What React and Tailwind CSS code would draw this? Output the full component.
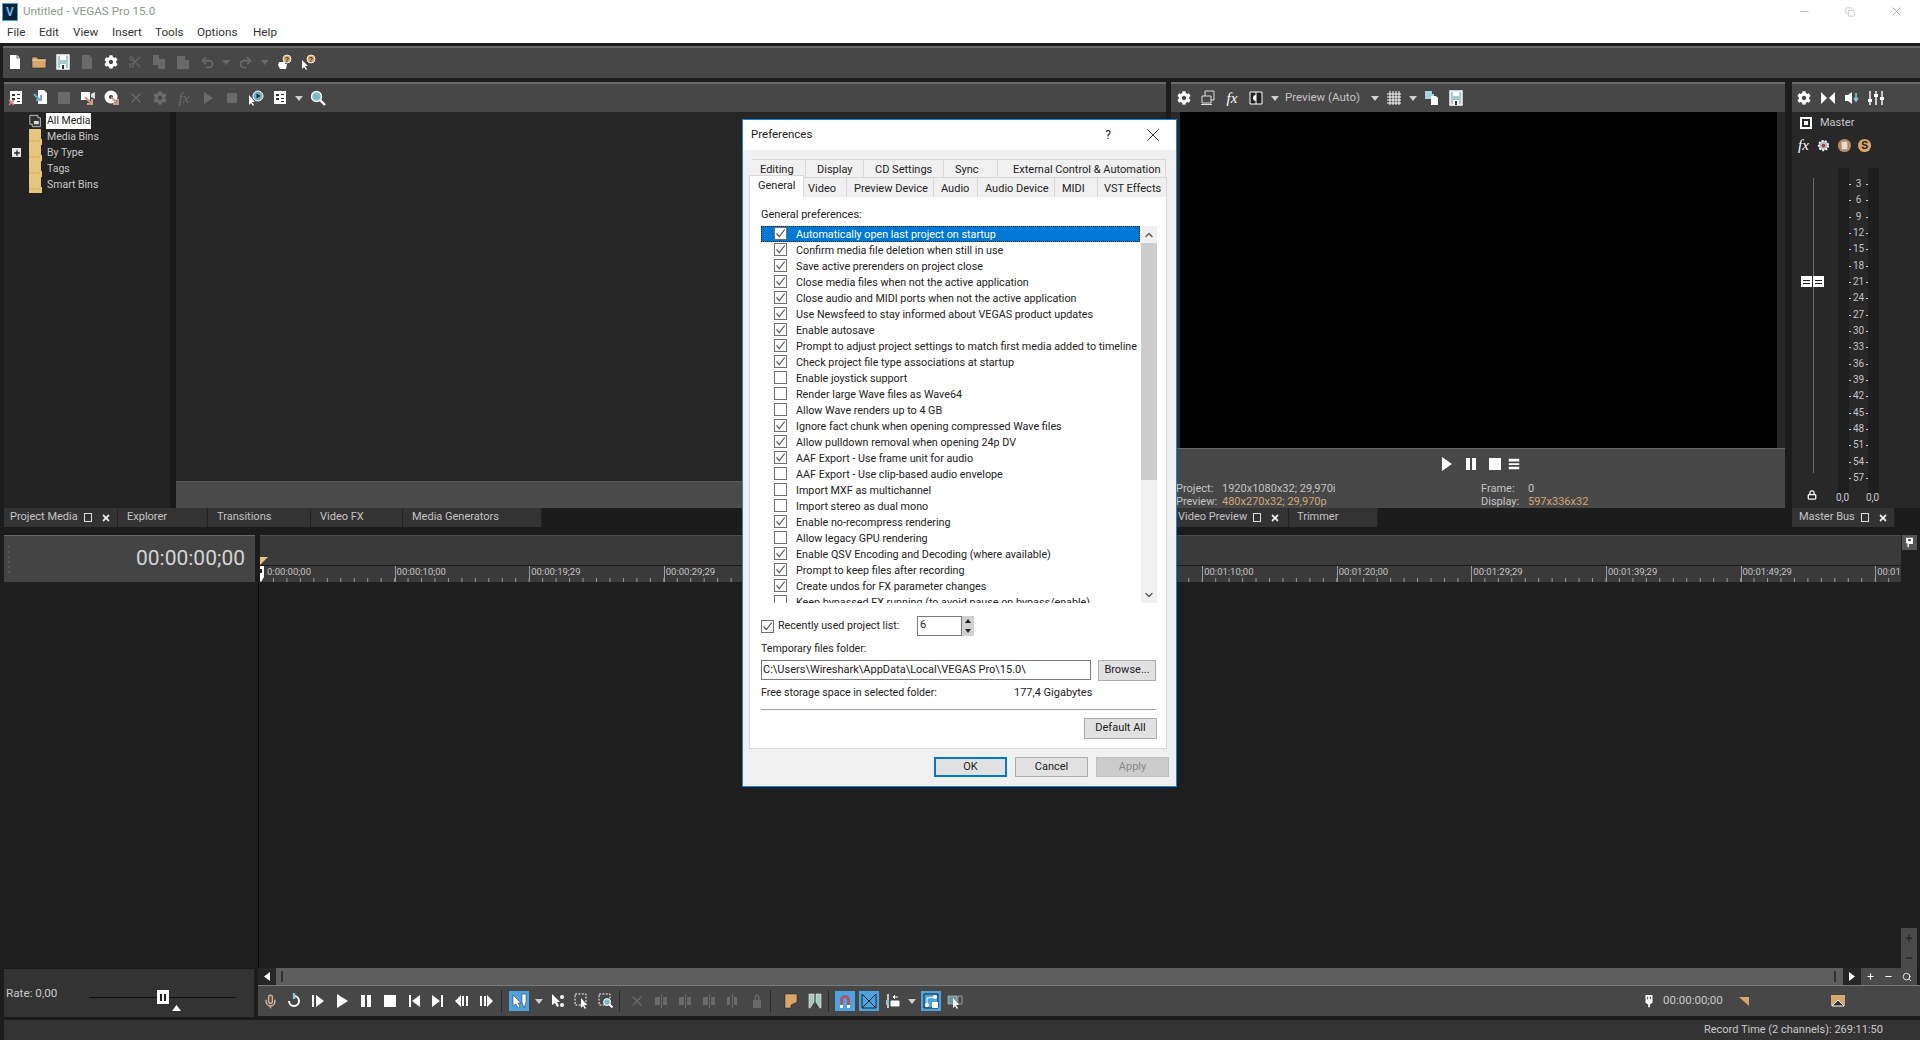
import { Scissors, Undo2, Redo2, X, Minus, Copy, Search, ChevronUp, ChevronDown, Lock, Mic, Plus } from 'lucide-react'
import { FaCog, FaTimes } from 'react-icons/fa'

const Svg = ({ size = 16, children, className = '' }) => (
  <svg width={size} height={size} viewBox="0 0 16 16" className={className}>{children}</svg>
)

const Cell = ({ children, className = 'w-6' }) => (
  <div className={`${className} h-full flex items-center justify-center shrink-0`}>{children}</div>
)

const Caret = ({ color = '#cfcfcf' }) => (
  <svg width="8" height="5" viewBox="0 0 8 5"><path d="M0 0h8L4 5z" fill={color} /></svg>
)

const Gear = ({ color = '#ffffff', size = 14 }) => <FaCog size={size} color={color} />

const Page = () => (
  <Svg><path d="M3 1h7l3 3v11H3z" fill="#fff" /><path d="M10 1v3h3" fill="none" stroke="#666" /></Svg>
)
const Folder = () => (
  <Svg><path d="M1 3h5l1 2h8v9H1z" fill="#d7a66b" stroke="#2e2e2e" strokeWidth="0.6" /><path d="M1 6h14" stroke="#f1d7ae" /></Svg>
)
const Floppy = ({ color = '#a9c9cc' }) => (
  <Svg><path d="M2 1h12v14H2z" fill={color} stroke="#fff" strokeWidth="1.4" /><path d="M5 2h6v4H5zM5 10h6v5H5z" fill="#fff" /><path d="M7 11h2v4H7z" fill="#333" /></Svg>
)
const Disabled = ({ d }) => (
  <Svg><path d={d} fill="#6a6a6a" /></Svg>
)
const HelpHand = ({ arrow }) => (
  <Svg>
    <circle cx="11" cy="5" r="4" fill="#d7a66b" stroke="#fff" strokeWidth="0.8" />
    <text x="11" y="7.6" textAnchor="middle" fontSize="7" fontWeight="700" fill="#333" fontFamily="Liberation Sans">?</text>
    {arrow
      ? <path d="M2 6v9l2-2 2 3 1-1-2-3h3z" fill="#fff" />
      : <path d="M3 8h6v2h2l-1 5H4l-2-4z" fill="#fff" />}
  </Svg>
)
const ListIcon = ({ redX }) => (
  <Svg>
    <path d="M2 1h12v13H2z" fill="#fff" />
    <path d="M4 4h3v2H4zM9 4h3v1H9zM4 8h3v2H4zM9 8h3v1H9zM9 11h3v1H9z" fill="#333" />
    {redX && <path d="M1 10l5 5M6 10l-5 5" stroke="#c77" strokeWidth="1.6" />}
  </Svg>
)
const ImportDoc = () => (
  <Svg><path d="M6 0h6l3 3v11H6z" fill="#fff" /><path d="M2 4l6 6M4 10h5V5" fill="none" stroke="#6fb0c8" strokeWidth="2" /></Svg>
)
const Capture = () => (
  <Svg><path d="M1 2h9v8H1z" fill="#fff" /><path d="M11 4l4-2v7l-4-2z" fill="#ddd" /><path d="M5 7l6 6M7 14h5V9" fill="none" stroke="#c98" strokeWidth="2" /></Svg>
)
const Disc = () => (
  <Svg><circle cx="7" cy="7" r="6.5" fill="#fff" /><circle cx="7" cy="7" r="2" fill="#333" /><path d="M7 7l6 6M9 14h5V9" fill="none" stroke="#c98" strokeWidth="2" /></Svg>
)
const Fx = ({ color = '#fff' }) => (
  <span className="font-['Liberation_Serif',serif] italic text-[15px] leading-none" style={{ color }}>fx</span>
)
const PointPlay = () => (
  <Svg><path d="M1 5v10l2-2 2 3 1-1-2-3h3z" fill="#fff" /><circle cx="10" cy="6" r="5" fill="#6fb0c8" stroke="#fff" /><path d="M8.5 3.5l4 2.5-4 2.5z" fill="#222" /></Svg>
)
const Mag = () => (
  <Svg><circle cx="6.5" cy="6.5" r="5" fill="#7fb8c9" stroke="#fff" strokeWidth="1.4" /><path d="M10 10l5 5" stroke="#fff" strokeWidth="2.4" /></Svg>
)

// small toolbar with the lighter line along its top edge
function Toolbar({ className = '', children }) {
  return (
    <div className={`h-full bg-[#474747] border-t-2 border-[#6a6a6a] flex items-center ${className}`}>{children}</div>
  )
}

function TitleBar() {
  return (
    <div className="h-[23px] bg-white flex items-center relative">
      <div className="ml-[2px] w-4 h-[18px] bg-[#0b2136] border border-[#4aa3d8] flex items-center justify-center text-[#5cb8e8] text-[12px] font-bold leading-none">V</div>
      <span className="ml-[5px] text-[11.7px] text-[#8b9a8b]">Untitled - VEGAS Pro 15.0</span>
      <div className="ml-auto flex items-center text-[#8a8a8a]">
        <div className="w-[46px] flex justify-center"><Minus size={13} strokeWidth={1} /></div>
        <div className="w-[46px] flex justify-center"><Copy size={10} strokeWidth={1} /></div>
        <div className="w-[46px] flex justify-center mr-[1px]"><X size={15} strokeWidth={1} /></div>
      </div>
    </div>
  )
}

function MenuBar() {
  const items = [['File', 'w-[32px]'], ['Edit', 'w-[34px]'], ['View', 'w-[39px]'], ['Insert', 'w-[43px]'], ['Tools', 'w-[42px]'], ['Options', 'w-[56px]'], ['Help', 'w-[40px]']]
  return (
    <div className="h-[20px] bg-white flex items-center pl-[7px] text-[11.7px] text-[#333]">
      {items.map(([t, w]) => <span key={t} className={w}>{t}</span>)}
    </div>
  )
}

function MainToolbar() {
  const dis = '#6a6a6a'
  return (
    <div className="h-[32px] ml-[3px] mt-[3px]">
      <Toolbar className="pb-[2px]">
        <Cell><Page /></Cell>
        <Cell><Folder /></Cell>
        <Cell><Floppy /></Cell>
        <Cell><Disabled d="M3 1h7l3 3v11H3z" /></Cell>
        <Cell><Gear /></Cell>
        <Cell><Scissors size={14} color={dis} /></Cell>
        <Cell><Disabled d="M2 1h6v10H2zM7 5h7v10H7z" /></Cell>
        <Cell><Disabled d="M2 2h8v13H2zM6 6h8v9H6z" /></Cell>
        <Cell><Undo2 size={15} color={dis} strokeWidth={2.6} /></Cell>
        <Cell className="w-[14px]"><Caret color={dis} /></Cell>
        <Cell><Redo2 size={15} color={dis} strokeWidth={2.6} /></Cell>
        <Cell className="w-[15px]"><Caret color={dis} /></Cell>
        <Cell><HelpHand /></Cell>
        <Cell><HelpHand arrow /></Cell>
      </Toolbar>
    </div>
  )
}

function MediaToolbar() {
  const dis = '#6a6a6a'
  return (
    <div className="h-[30px]">
      <Toolbar>
        <Cell><ListIcon redX /></Cell>
        <Cell><ImportDoc /></Cell>
        <Cell><Disabled d="M2 2h12v12H2z" /></Cell>
        <Cell><Capture /></Cell>
        <Cell><Disc /></Cell>
        <Cell><X size={16} color={dis} strokeWidth={2} /></Cell>
        <Cell><Gear color={dis} /></Cell>
        <Cell><Fx color={dis} /></Cell>
        <Cell><Disabled d="M4 2l9 6-9 6z" /></Cell>
        <Cell><Disabled d="M3 3h10v10H3z" /></Cell>
        <Cell><PointPlay /></Cell>
        <Cell><ListIcon /></Cell>
        <Cell className="w-[14px]"><Caret /></Cell>
        <Cell><Mag /></Cell>
      </Toolbar>
    </div>
  )
}

function FolderRow({ label, plus, active, allMedia }) {
  return (
    <div className="h-4 flex items-center relative">
      {plus && <div className="absolute left-[8px] top-[3px] w-[9px] h-[9px] bg-[#e8e8e8] flex items-center justify-center"><Plus size={8} strokeWidth={4} color="#222" /></div>}
      <div className="ml-[25px] w-[13px] h-4 flex items-center justify-center">
        {allMedia
          ? <Svg size={14}><path d="M1 1h10v3h3v11H4v-3H1z" fill="#333" stroke="#ddd" /><path d="M6 8h6v4H6z" fill="#ddd" /></Svg>
          : <svg width="13" height="16" viewBox="0 0 13 16"><path d="M0 0h12v10h1v5H0z M0 15h13v1H0z" fill="#e6c67e" /><path d="M0 12h11" stroke="#cda35c" strokeDasharray="2 1" /></svg>}
      </div>
      <span className={`ml-[4px] px-[1px] text-[10.5px] leading-[16px] ${active ? 'bg-white text-[#222]' : 'text-[#c8c8c8]'}`}>{label}</span>
    </div>
  )
}

function DockTabs({ items, className = '' }) {
  return (
    <div className={`h-[19px] flex text-[11px] text-[#c4c4c4] ${className}`}>
      {items.map(t => (
        <div key={t.label} className={`${t.w} h-full flex items-center bg-[#333333] border-r border-[#222] ${t.pl}`}>
          <span>{t.label}</span>
          {t.dock && (
            <>
              <div className="ml-[6px] w-[8px] h-[9px] border border-[#ddd]" />
              <FaTimes size={10} color="#eee" className="ml-[9px]" />
            </>
          )}
        </div>
      ))}
    </div>
  )
}

function MediaPanel() {
  return (
    <div className="w-[1162px] ml-[4px] shrink-0 flex flex-col">
      <MediaToolbar />
      <div className="h-[396px] flex">
        <div className="w-[166px] bg-[#232323] pt-[1px]">
          <FolderRow label="All Media" active allMedia />
          <FolderRow label="Media Bins" />
          <FolderRow label="By Type" plus />
          <FolderRow label="Tags" />
          <FolderRow label="Smart Bins" />
        </div>
        <div className="w-[6px] bg-[#1a1a1a]" />
        <div className="flex-1 flex flex-col bg-[#262626]">
          <div className="flex-1" />
          <div className="h-[27px] bg-[#4a4a4a] border-t border-[#5c5c5c]" />
        </div>
      </div>
      <DockTabs items={[
        { label: 'Project Media', w: 'w-[114px]', pl: 'pl-[6px]', dock: true },
        { label: 'Explorer', w: 'w-[90px]', pl: 'pl-[9px]' },
        { label: 'Transitions', w: 'w-[103px]', pl: 'pl-[9px]' },
        { label: 'Video FX', w: 'w-[92px]', pl: 'pl-[9px]' },
        { label: 'Media Generators', w: 'w-[139px]', pl: 'pl-[9px]' },
      ]} />
    </div>
  )
}

function PreviewPanel() {
  return (
    <div className="w-[614px] ml-[5px] shrink-0 flex flex-col">
      <div className="h-[30px]">
        <Toolbar className="pl-[1px]">
          <Cell><Gear /></Cell>
          <Cell><Svg><path d="M5 1h9v9H5z" fill="none" stroke="#ddd" /><path d="M2 6h9v7H2z" fill="#474747" stroke="#ddd" /><path d="M1 14h11v1H1z" fill="#ddd" /></Svg></Cell>
          <Cell><Fx /></Cell>
          <Cell><Svg><path d="M2 2h12v12H2z" fill="#222" stroke="#fff" /><path d="M8 2v12" stroke="#fff" /><path d="M8 5a3 3 0 000 6z" fill="#fff" /></Svg></Cell>
          <Cell className="w-[14px]"><Caret /></Cell>
          <span className="ml-[3px] w-[84px] text-[11.5px] text-[#c4c4c4]">Preview (Auto)</span>
          <Cell className="w-[12px]"><Caret /></Cell>
          <Cell className="w-[24px] ml-[1px]"><Svg><path d="M4 1v14M7 1v14M10 1v14M13 1v14M1 4h14M1 7h14M1 10h14M1 13h14" stroke="#fff" /></Svg></Cell>
          <Cell className="w-[14px]"><Caret /></Cell>
          <Cell><Svg><path d="M1 1h7v3h2v5H1z" fill="#a9d4e0" /><path d="M7 6h5l2 2v7H7z" fill="#fff" /></Svg></Cell>
          <Cell><Floppy /></Cell>
        </Toolbar>
      </div>
      <div className="h-[336px] flex bg-[#262626]">
        <div className="w-[9px] bg-[#2a2a2a]" />
        <div className="w-[597px] bg-black" />
      </div>
      <div className="h-[60px] bg-[#474747] border-t border-[#666] relative">
        <div className="flex h-[30px] items-center pl-[263px]">
          <Cell className="w-[24px]"><Svg><path d="M4 1l10 7-10 7z" fill="#fff" /></Svg></Cell>
          <Cell className="w-[25px]"><Svg><path d="M3 2h4v12H3zM9 2h4v12H9z" fill="#fff" /></Svg></Cell>
          <Cell className="w-[24px]"><Svg><path d="M2 2h12v12H2z" fill="#fff" /></Svg></Cell>
          <Cell className="w-[14px]"><Svg><path d="M2 2h12v3H2zM2 7h12v2H2zM2 11h12v3H2z" fill="#fff" /></Svg></Cell>
        </div>
        <div className="flex mt-[3px] text-[11px] leading-[13px] text-[#c4c4c4]">
          <div className="w-[310px] pl-[5px]">
            <div className="flex"><span className="w-[46px]">Project:</span><span>1920x1080x32; 29,970i</span></div>
            <div className="flex"><span className="w-[46px]">Preview:</span><span className="text-[#d0a679]">480x270x32; 29,970p</span></div>
          </div>
          <div>
            <div className="flex"><span className="w-[47px]">Frame:</span><span>0</span></div>
            <div className="flex"><span className="w-[47px]">Display:</span><span className="text-[#d0a679]">597x336x32</span></div>
          </div>
        </div>
      </div>
      <DockTabs items={[
        { label: 'Video Preview', w: 'w-[118px]', pl: 'pl-[7px]', dock: true },
        { label: 'Trimmer', w: 'w-[89px]', pl: 'pl-[8px]' },
      ]} />
    </div>
  )
}

function MasterPanel() {
  const levels = [3, 6, 9, 12, 15, 18, 21, 24, 27, 30, 33, 36, 39, 42, 45, 48, 51, 54, 57]
  return (
    <div className="w-[128px] ml-[7px] shrink-0 flex flex-col">
      <div className="h-[30px]">
        <Toolbar>
          <Cell><Gear /></Cell>
          <Cell><Svg><path d="M1 2l6 6-6 6zM15 2L9 8l6 6z" fill="#fff" /></Svg></Cell>
          <Cell><Svg><path d="M1 5h3l4-3v12l-4-3H1z" fill="#fff" /><path d="M12 3v7M10 8l2 3 2-3" fill="none" stroke="#8fc4d4" strokeWidth="1.6" /></Svg></Cell>
          <Cell><Svg><path d="M2 1v14M8 1v14M14 1v14" stroke="#fff" strokeWidth="1.4" /><path d="M0 9h4v3H0zM6 4h4v3H6zM12 7h4v3h-4z" fill="#fff" /></Svg></Cell>
        </Toolbar>
      </div>
      <div className="h-[396px] bg-[#282828] relative">
        <div className="h-[22px] flex items-center pl-[8px] text-[11px] text-[#c4c4c4]">
          <div className="w-[12px] h-[12px] border-2 border-white flex items-center justify-center"><div className="w-[4px] h-[4px] bg-white" /></div>
          <span className="ml-[8px]">Master</span>
        </div>
        <div className="h-[22px] flex items-center pl-[6px] gap-[6px]">
          <Fx />
          <Svg size={15} className="ml-[1px]"><circle cx="8" cy="8" r="5" fill="#bbb" stroke="#fff" strokeDasharray="2 1.5" strokeWidth="2" /><circle cx="8" cy="8" r="2" fill="#944" /></Svg>
          <Svg size={15}><circle cx="8" cy="8" r="7" fill="#b48a66" /><path d="M5 4h6v8H5z" fill="#fff" opacity=".7" /></Svg>
          <Svg size={15}><circle cx="7" cy="8" r="7" fill="#d7a66b" /><text x="7" y="12" textAnchor="middle" fontSize="11" fontWeight="700" fill="#222" fontFamily="Liberation Sans">S</text></Svg>
        </div>
        {/* fader handle and meters sit over the panel */}
        <div className="absolute left-[21px] top-[66px] w-[1px] h-[295px] bg-[#6e6e6e]" />
        <div className="absolute left-[9px] top-[164px] flex gap-[1px]">
          {[0, 1].map(i => (
            <div key={i} className="w-[11px] h-[11px] bg-white flex flex-col justify-center gap-[2px] items-center">
              <div className="w-[7px] h-[1px] bg-[#222]" /><div className="w-[7px] h-[1px] bg-[#222]" />
            </div>
          ))}
        </div>
        <div className="absolute left-[46px] top-[56px] w-[11px] h-[325px] bg-[#1e1e1e]" />
        <div className="absolute left-[76px] top-[56px] w-[11px] h-[325px] bg-[#1e1e1e]" />
        <div className="absolute left-[57px] top-[64px] w-[19px] flex flex-col text-[10px] leading-[16.33px] text-[#c4c4c4]">
          {levels.map(l => (
            <div key={l} className="relative text-center">
              {l}
              <div className="absolute left-0 top-[8px] w-[2px] h-[1px] bg-[#ccc]" />
              <div className="absolute right-0 top-[8px] w-[2px] h-[1px] bg-[#ccc]" />
            </div>
          ))}
        </div>
        <Lock size={10} color="#fff" strokeWidth={3} className="absolute left-[15px] top-[378px]" />
        <span className="absolute left-[44px] top-[380px] text-[10px] leading-[12px] text-[#c4c4c4]">0,0</span>
        <span className="absolute left-[74px] top-[380px] text-[10px] leading-[12px] text-[#c4c4c4]">0,0</span>
      </div>
      <DockTabs items={[{ label: 'Master Bus', w: 'w-[103px]', pl: 'pl-[7px]', dock: true }]} />
    </div>
  )
}

function Ruler() {
  const labels = ['0:00:00;00', '00:00:10;00', '00:00:19;29', '00:00:29;29', '00:00:39;29', '00:00:49;29', '00:00:59;29', '00:01:10;00', '00:01:20;00', '00:01:29;29', '00:01:39;29', '00:01:49;29', '00:01']
  const ticks = Array.from({ length: 122 }, (_, i) => 13.46 * i)
  return (
    <div className="flex-1 flex flex-col min-w-0 overflow-hidden">
      <div className="h-[30px] bg-[#3a3a3a] border-t border-[#4a4a4a] relative">
        <svg width="8" height="8" className="absolute left-0 bottom-0"><path d="M0 0h8L0 8z" fill="#e8c27e" /></svg>
      </div>
      <div className="h-[17px] bg-[#3a3a3a] border-t border-[#1c1c1c] relative">
        <div className="flex h-[11px] text-[9.5px] leading-[11px] text-[#c4c4c4]">
          {labels.map((l, i) => (
            <div key={l} className={`${i === 0 ? 'pl-[6px]' : 'pl-[1px]'} w-[134.6px] shrink-0 border-l border-[#999] h-[16px]`}>{l}</div>
          ))}
        </div>
        <svg width="1640" height="4" className="absolute left-0 bottom-0">
          {ticks.map(x => <path key={x} d={`M${x} 0v4`} stroke="#999" />)}
        </svg>
        <svg width="8" height="16" className="absolute left-[-3px] top-0"><path d="M1 0h6v11l-3 5-3-5z" fill="#fff" /><path d="M3 3h2v4H3z" fill="#222" /></svg>
      </div>
    </div>
  )
}

function Timeline() {
  return (
    <div className="flex-1 flex flex-col min-h-0">
      <div className="h-[47px] flex">
        <div className="w-[251px] ml-[4px] bg-[#444444] border-t border-[#666] flex items-center text-[21px] text-[#d4d4d4]">
          <div className="ml-[4px] flex flex-col gap-[3px]">
            {[0, 1, 2, 3, 4, 5].map(i => <div key={i} className="w-[2px] h-[2px] rounded-full bg-[#5e5e5e]" />)}
          </div>
          <span className="ml-auto mr-[10px]">00:00:00;00</span>
        </div>
        <div className="w-[5px]" />
        <Ruler />
        <div className="w-[19px] shrink-0 flex flex-col items-start pl-[1px] bg-[#1f1f1f]">
          <div className="w-[15px] h-[15px] bg-[#555] flex items-center justify-center">
            <Svg size={11}><path d="M3 1h10v9H7v5H5V9H3z" fill="#fff" /><path d="M6 3h4v3H6z" fill="#555" /></Svg>
          </div>
        </div>
      </div>
      <div className="flex-1 flex relative min-h-0 bg-[#1e1e1e]">
        <div className="absolute left-[258px] top-0 bottom-0 w-[1px] bg-[#0a0a0a]" />
        <div className="ml-auto mr-[3px] w-[16px] flex flex-col justify-end">
          <div className="h-[40px] bg-[#4a4a4a] flex flex-col items-center justify-around">
            <Plus size={10} color="#222" strokeWidth={3} />
            <Minus size={10} color="#222" strokeWidth={3} />
          </div>
        </div>
      </div>
    </div>
  )
}

function Transport() {
  const dis = '#6a6a6a'
  const Sep = ({ cls = 'mx-[3px]' }) => <div className={`w-[1px] h-[22px] bg-[#2a2a2a] ${cls}`} />
  const Blue = ({ children }) => (
    <Cell><div className="w-[20px] h-[20px] bg-[#4ba3e0] flex items-center justify-center">{children}</div></Cell>
  )
  return (
    <div className="h-[30px] bg-[#474747] flex items-center">
      <Cell><Mic size={15} color="#d2b197" strokeWidth={2.4} /></Cell>
      <Cell><Svg><path d="M8 3a5 5 0 11-5 5" fill="none" stroke="#fff" strokeWidth="2" /><path d="M8 0v6" stroke="#8fc4d4" strokeWidth="2.4" /></Svg></Cell>
      <Cell><Svg><path d="M2 2h2v12H2zM6 2l8 6-8 6z" fill="#fff" /></Svg></Cell>
      <Cell><Svg><path d="M3 1l11 7-11 7z" fill="#fff" /></Svg></Cell>
      <Cell><Svg><path d="M3 2h4v12H3zM9 2h4v12H9z" fill="#fff" /></Svg></Cell>
      <Cell><Svg><path d="M2 2h12v12H2z" fill="#fff" /></Svg></Cell>
      <Cell><Svg><path d="M3 2h2v12H3zM14 2L6 8l8 6z" fill="#fff" /></Svg></Cell>
      <Cell><Svg><path d="M11 2h2v12h-2zM2 2l8 6-8 6z" fill="#fff" /></Svg></Cell>
      <Cell><Svg><path d="M7 2L1 8l6 6zM8 3h2v10H8zM12 3h2v10h-2z" fill="#fff" /></Svg></Cell>
      <Cell><Svg><path d="M9 2l6 6-6 6zM2 3h2v10H2zM6 3h2v10H6z" fill="#fff" /></Svg></Cell>
      <Sep />
      <div className="w-[2px]" />
      <Blue><Svg><path d="M2 2v11l3-2 2 4 2-1-2-4h3zM11 1h4v8l-2 6-2-6z" fill="#fff" stroke="#222" strokeWidth=".5" /></Svg></Blue>
      <Cell className="w-[15px]"><Caret /></Cell>
      <Cell><Svg><path d="M2 1v11l3-2 2 4 2-1-2-4h3z" fill="#fff" /><circle cx="12" cy="4" r="2" fill="#fff" /><circle cx="12" cy="12" r="2" fill="#fff" /></Svg></Cell>
      <Cell><Svg><path d="M1 1h11v11H1z" fill="none" stroke="#fff" strokeDasharray="2 1.4" /><path d="M7 5v10l2-2 2 3 1-1-2-3h3z" fill="#fff" /></Svg></Cell>
      <Cell><Svg><path d="M1 1h11v11H1z" fill="none" stroke="#fff" strokeDasharray="2 1.4" /><circle cx="9" cy="9" r="3.4" fill="#7fb8c9" stroke="#fff" /><path d="M11.5 11.5l3 3" stroke="#fff" strokeWidth="2" /></Svg></Cell>
      <Sep cls="ml-[1px] mr-[5px]" />
      <Cell><X size={16} color={dis} strokeWidth={2} /></Cell>
      <Cell><Disabled d="M2 4h5v8H2zM8 1h1v14H8zM10 4h4v8h-4z" /></Cell>
      <Cell><Disabled d="M2 4h5v8H2zM8 1h1v14H8zM10 4h4v8h-4z" /></Cell>
      <Cell><Disabled d="M2 4h5v8H2zM8 1h1v14H8zM10 4h4v8h-4z" /></Cell>
      <Cell><Disabled d="M2 4h3v8H2zM7 1h1v14H7zM9 4h3v8H9z" /></Cell>
      <Cell><Disabled d="M4 7h8v8H4zM5.5 7V4a2.5 2.5 0 015 0v3h-1.500V4a1 1 0 00-2 0v3z" /></Cell>
      <Sep cls="ml-[1px] mr-[8px]" />
      <Cell><Svg><path d="M2 1h12v8l-6 3v3H2z" fill="#d7a66b" stroke="#222" strokeWidth=".5" /></Svg></Cell>
      <Cell><Svg><path d="M2 1h5v8L3 15H2zM9 1h5v14h-1l-4-6z" fill="#a6c9bf" stroke="#eee" strokeWidth=".6" /></Svg></Cell>
      <Sep cls="mr-[4px] ml-[1px]" />
      <Blue><Svg><path d="M3 14V7a5 5 0 0110 0v7h-3V7a2 2 0 00-4 0v7z" fill="#b05566" /><path d="M3 12h3v3H3zM10 12h3v3h-3z" fill="#fff" /></Svg></Blue>
      <Blue><Svg><path d="M1 1v14h14L1 1zM15 1L1 15M15 1v14" fill="none" stroke="#222" /></Svg></Blue>
      <Cell><Svg><path d="M3 1v14" stroke="#fff" strokeWidth="1.4" /><path d="M1 7h3v5H1z" fill="#8fc4d4" /><path d="M6 8h8v5H6zM13 4H8M10 2L8 4l2 2" fill="#fff" stroke="#fff" /></Svg></Cell>
      <Cell className="w-[14px]"><Caret /></Cell>
      <Blue><Svg><path d="M1 1h14v14H1z" fill="none" stroke="#222" /><circle cx="4" cy="12" r="2" fill="#fff" /><circle cx="12" cy="4" r="2" fill="#fff" /><path d="M4 12V5l8-1" fill="none" stroke="#fff" /><path d="M9 9h6v6H9z" fill="#fff" /></Svg></Blue>
      <Cell><Svg><path d="M1 3h9v8H1z" fill="#6e93a3" stroke="#ccc" strokeWidth=".6" /><path d="M11 3h4v8h-4z" fill="none" stroke="#ccc" strokeWidth=".6" /><path d="M6 5v10l2-2 2 3 1-1-2-3h3z" fill="#fff" /></Svg></Cell>
      <div className="ml-auto flex items-center h-full">
        <Svg size={14}><path d="M4 1h8v9l-3 2v3H7v-3l-3-2z" fill="#fff" /><path d="M6 3h1v3H6zM9 3h1v3H9z" fill="#222" /></Svg>
        <span className="ml-[7px] w-[74px] text-[11.5px] text-[#c8c8c8]">00:00:00;00</span>
        <svg width="10" height="10" className="ml-[2px]"><path d="M0 1h10v9z" fill="#d7a66b" /></svg>
        <div className="w-[81px]" />
        <Svg><path d="M1 2h14v11H1z" fill="#d7a66b" /><path d="M2 13l6-6 6 6z" fill="#333" stroke="#fff" /></Svg>
        <div className="w-[74px]" />
      </div>
    </div>
  )
}

function BottomStrip() {
  return (
    <div className="h-[49px] flex shrink-0">
      <div className="w-[250px] ml-[4px] mt-[1px] bg-[#333] flex items-center relative text-[11.7px] text-[#c8c8c8] pl-[2px]">
        <span className="mt-[1px]">Rate: 0,00</span>
        <div className="absolute left-[85px] top-[28px] w-[147px] h-[1px] bg-[#111]" />
        <div className="absolute left-[153px] top-[21px] w-[12px] h-[14px] bg-white flex items-center justify-center gap-[2px]">
          <div className="w-[2px] h-[7px] bg-[#222]" /><div className="w-[2px] h-[7px] bg-[#222]" />
        </div>
        <svg width="9" height="6" className="absolute left-[168px] top-[36px]"><path d="M0 6h9L4.500 0z" fill="#fff" /></svg>
      </div>
      <div className="w-[4px]" />
      <div className="flex-1 flex flex-col">
        <div className="h-[17px] flex items-stretch">
          <div className="w-[18px] bg-[#262626] flex items-center justify-center">
            <svg width="6" height="9"><path d="M6 0v9L0 4.500z" fill="#fff" /></svg>
          </div>
          <div className="flex-1 bg-[#5e5e5e] flex items-center justify-between pl-[5px] pr-[7px]">
            <div className="w-[2px] h-[11px] bg-[#333]" />
            <div className="w-[2px] h-[11px] bg-[#333]" />
          </div>
          <div className="w-[18px] bg-[#262626] flex items-center justify-center">
            <svg width="6" height="9"><path d="M0 0v9l6-4.500z" fill="#fff" /></svg>
          </div>
          <div className="w-[56px] mr-[3px] bg-[#4a4a4a] flex items-center justify-around text-white">
            <Plus size={9} strokeWidth={3} />
            <Minus size={9} strokeWidth={3} />
            <Search size={10} strokeWidth={2} />
          </div>
        </div>
        <div className="h-[1px] bg-[#7a7a7a]" />
        <Transport />
      </div>
    </div>
  )
}

function Check({ on }) {
  return (
    <div className="w-[13px] h-[13px] bg-white border border-[#707070] shrink-0 flex items-center justify-center">
      {on && <svg width="11" height="11" viewBox="0 0 11 11"><path d="M1.500 5.500l2.800 3 5.500-7" fill="none" stroke="#555" strokeWidth="1.200" /></svg>}
    </div>
  )
}

const prefs = [
  ['Automatically open last project on startup', true],
  ['Confirm media file deletion when still in use', true],
  ['Save active prerenders on project close', true],
  ['Close media files when not the active application', true],
  ['Close audio and MIDI ports when not the active application', true],
  ['Use Newsfeed to stay informed about VEGAS product updates', true],
  ['Enable autosave', true],
  ['Prompt to adjust project settings to match first media added to timeline', true],
  ['Check project file type associations at startup', true],
  ['Enable joystick support', false],
  ['Render large Wave files as Wave64', false],
  ['Allow Wave renders up to 4 GB', false],
  ['Ignore fact chunk when opening compressed Wave files', true],
  ['Allow pulldown removal when opening 24p DV', true],
  ['AAF Export - Use frame unit for audio', true],
  ['AAF Export - Use clip-based audio envelope', false],
  ['Import MXF as multichannel', false],
  ['Import stereo as dual mono', false],
  ['Enable no-recompress rendering', true],
  ['Allow legacy GPU rendering', false],
  ['Enable QSV Encoding and Decoding (where available)', true],
  ['Prompt to keep files after recording', true],
  ['Create undos for FX parameter changes', true],
  ['Keep bypassed FX running (to avoid pause on bypass/enable)', false],
]

function DialogTab({ label, cls, active }) {
  return (
    <div className={`${cls} shrink-0 flex items-center border-t border-r border-[#d9d9d9] ${active ? 'bg-white h-[22px] -mt-[2px] border-l pb-[1px] relative' : 'bg-[#f0f0f0] h-full pt-[3px]'}`}>{label}</div>
  )
}

function GreyButton({ label, className = '' }) {
  return (
    <div className={`h-[21px] bg-[#e1e1e1] border border-[#adadad] flex items-center justify-center ${className}`}>{label}</div>
  )
}

function Preferences() {
  return (
    <div className="absolute left-[742px] top-[119px] w-[435px] h-[668px] bg-[#f0f0f0] border border-[#1883d7] flex flex-col text-[11px] text-[#222]">
      <div className="h-[30px] bg-white flex items-center pl-[8px] shrink-0 text-[11.5px]">
        <span>Preferences</span>
        <span className="ml-auto mr-[31px] text-[12px]">?</span>
        <X size={22} strokeWidth={1} className="mr-[12px]" />
      </div>
      <div className="pl-[9px] h-[18px] mt-[9px] flex shrink-0">
        <DialogTab label="Editing" cls="w-[54px] pl-[8px]" />
        <DialogTab label="Display" cls="w-[58px] pl-[11px]" />
        <DialogTab label="CD Settings" cls="w-[80px] pl-[11px]" />
        <DialogTab label="Sync" cls="w-[54px] pl-[11px]" />
        <DialogTab label="External Control & Automation" cls="w-[168px] pl-[15px]" />
      </div>
      <div className="pl-[6px] h-[20px] flex shrink-0">
        <DialogTab label="General" cls="w-[55px] pl-[8px]" active />
        <DialogTab label="Video" cls="w-[43px] pl-[4px]" />
        <DialogTab label="Preview Device" cls="w-[87px] pl-[7px]" />
        <DialogTab label="Audio" cls="w-[44px] pl-[7px]" />
        <DialogTab label="Audio Device" cls="w-[77px] pl-[7px]" />
        <DialogTab label="MIDI" cls="w-[43px] pl-[7px]" />
        <DialogTab label="VST Effects" cls="w-[69px] pl-[6px]" />
      </div>
      <div className="ml-[6px] w-[418px] h-[552px] bg-white border border-t-0 border-[#d9d9d9] pl-[11px] flex flex-col shrink-0">
        <div className="h-[29px] leading-[35px] shrink-0">General preferences:</div>
        <div className="w-[396px] h-[377px] flex overflow-hidden shrink-0 text-[10.75px]">
          <div className="w-[379px] overflow-hidden">
            {prefs.map(([label, on], i) => (
              <div key={label} className={`h-[16px] flex items-center whitespace-nowrap ${i === 0 ? 'bg-[#0078d7] text-white outline-1 outline-dotted outline-offset-[-1px] outline-[#222]' : ''}`}>
                <div className="ml-[13px] mr-[9px] mb-[2px]"><Check on={on} /></div>
                <span className="leading-[13px]">{label}</span>
              </div>
            ))}
          </div>
          <div className="w-[16px] ml-[1px] bg-[#f0f0f0] flex flex-col">
            <div className="h-[17px] flex items-center justify-center"><ChevronUp size={12} strokeWidth={2.5} color="#555" /></div>
            <div className="h-[237px] bg-[#cdcdcd]" />
            <div className="flex-1" />
            <div className="h-[17px] flex items-center justify-center"><ChevronDown size={12} strokeWidth={2.5} color="#555" /></div>
          </div>
        </div>
        <div className="h-[20px] mt-[13px] flex items-center shrink-0 text-[10.7px]">
          <Check on />
          <span className="ml-[4px] w-[139px]">Recently used project list:</span>
          <div className="w-[45px] h-full bg-white border border-[#7a7a7a] pl-[2px] text-[11px] leading-[15px]">6</div>
          <div className="w-[12px] h-full bg-[#d0d0d0] flex flex-col items-center justify-around">
            <svg width="6" height="4"><path d="M0 4h6L3 0z" fill="#222" /></svg>
            <svg width="6" height="4"><path d="M0 0h6L3 4z" fill="#222" /></svg>
          </div>
        </div>
        <div className="h-[24px] leading-[26px] shrink-0 text-[10.6px]">Temporary files folder:</div>
        <div className="h-[20px] flex shrink-0">
          <div className="w-[330px] h-full bg-white border border-[#7a7a7a] pl-[1px] leading-[18px]">C:\Users\Wireshark\AppData\Local\VEGAS Pro\15.0\</div>
          <GreyButton label="Browse..." className="w-[58px] ml-[7px]" />
        </div>
        <div className="h-[26px] flex items-center shrink-0">
          <span className="w-[253px] text-[10.6px]">Free storage space in selected folder:</span>
          <span>177,4 Gigabytes</span>
        </div>
        <div className="w-[395px] h-[1px] mt-[3px] bg-[#a0a0a0] shrink-0" />
        <GreyButton label="Default All" className="w-[73px] ml-[323px] mt-[8px] shrink-0" />
      </div>
      <div className="flex justify-end gap-[8px] pr-[7px] mt-[8px]">
        <div className="w-[73px] h-[20px] bg-[#e1e1e1] border-2 border-[#0078d7] flex items-center justify-center">OK</div>
        <GreyButton label="Cancel" className="w-[73px] !h-[20px]" />
        <GreyButton label="Apply" className="w-[73px] !h-[20px] !bg-[#cccccc] !text-[#888] !border-[#bfbfbf]" />
      </div>
    </div>
  )
}

export default function App() {
  return (
    <div className="w-[1920px] h-[1040px] relative overflow-hidden bg-[#1c1c1c] flex flex-col font-['Roboto','Liberation_Sans',sans-serif]">
      <TitleBar />
      <MenuBar />
      <MainToolbar />
      <div className="h-[445px] mt-[4px] flex shrink-0">
        <MediaPanel />
        <PreviewPanel />
        <MasterPanel />
      </div>
      <div className="h-[8px] shrink-0" />
      <Timeline />
      <BottomStrip />
      <div className="h-[20px] mt-[3px] bg-[#333] ml-[4px] shrink-0 flex items-center justify-end pr-[37px] text-[11px] text-[#c8c8c8]">
        Record Time (2 channels): 269:11:50
      </div>
      <Preferences />
    </div>
  )
}
